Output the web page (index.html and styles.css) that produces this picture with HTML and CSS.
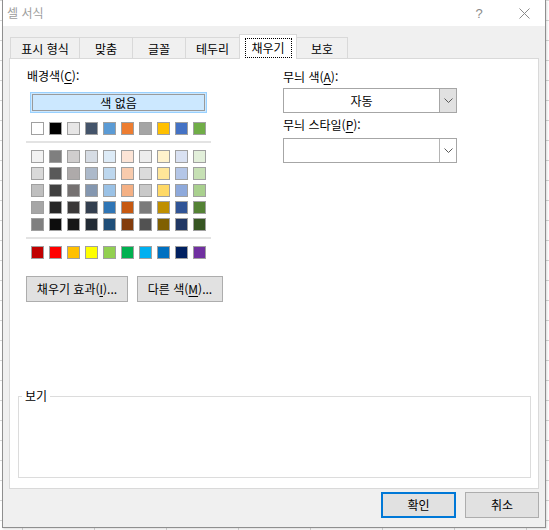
FILE: index.html
```html
<!DOCTYPE html>
<html lang="ko">
<head>
<meta charset="utf-8">
<title>셀 서식</title>
<link rel="stylesheet" href="styles.css">
</head>
<body>
<div class="dialog">
  <div class="titlebar">
    <span class="title">셀 서식</span>
    <span class="help">?</span>
    <span class="close"><svg width="11" height="11" viewBox="0 0 11 11"><path d="M0.5 0.5 L10.5 10.5 M10.5 0.5 L0.5 10.5" stroke="#8a8a8a" stroke-width="1" fill="none"/></svg></span>
  </div>
  <div class="body">
    <div class="tabs">
      <div class="tab t1">표시 형식</div>
      <div class="tab t2">맞춤</div>
      <div class="tab t3">글꼴</div>
      <div class="tab t4">테두리</div>
      <div class="tab t5 sel"><span class="focus">채우기</span></div>
      <div class="tab t6">보호</div>
    </div>
    <div class="panel">
      <div class="cols">
        <div class="left">
          <div class="lbl">배경색(<u>C</u>):</div>
          <div class="nocolor"><span class="nocolor-in">색 없음</span></div>
          <div class="swrow first">
            <span class="sw" style="background:#FFFFFF"></span><span class="sw" style="background:#000000"></span><span class="sw" style="background:#E7E6E6"></span><span class="sw" style="background:#44546A"></span><span class="sw" style="background:#5B9BD5"></span><span class="sw" style="background:#ED7D31"></span><span class="sw" style="background:#A5A5A5"></span><span class="sw" style="background:#FFC000"></span><span class="sw" style="background:#4472C4"></span><span class="sw" style="background:#70AD47"></span>
          </div>
          <div class="sep"></div>
          <div class="swgrid">
            <div class="swrow">
              <span class="sw" style="background:#F2F2F2"></span><span class="sw" style="background:#7F7F7F"></span><span class="sw" style="background:#D0CECE"></span><span class="sw" style="background:#D6DCE4"></span><span class="sw" style="background:#DDEBF7"></span><span class="sw" style="background:#FCE4D6"></span><span class="sw" style="background:#EDEDED"></span><span class="sw" style="background:#FFF2CC"></span><span class="sw" style="background:#D9E1F2"></span><span class="sw" style="background:#E2EFDA"></span>
            </div>
            <div class="swrow">
              <span class="sw" style="background:#D9D9D9"></span><span class="sw" style="background:#595959"></span><span class="sw" style="background:#AEAAAA"></span><span class="sw" style="background:#ACB9CA"></span><span class="sw" style="background:#BDD7EE"></span><span class="sw" style="background:#F8CBAD"></span><span class="sw" style="background:#DBDBDB"></span><span class="sw" style="background:#FFE699"></span><span class="sw" style="background:#B4C6E7"></span><span class="sw" style="background:#C6E0B4"></span>
            </div>
            <div class="swrow">
              <span class="sw" style="background:#BFBFBF"></span><span class="sw" style="background:#404040"></span><span class="sw" style="background:#757171"></span><span class="sw" style="background:#8497B0"></span><span class="sw" style="background:#9BC2E6"></span><span class="sw" style="background:#F4B084"></span><span class="sw" style="background:#C9C9C9"></span><span class="sw" style="background:#FFD966"></span><span class="sw" style="background:#8EA9DB"></span><span class="sw" style="background:#A9D08E"></span>
            </div>
            <div class="swrow">
              <span class="sw" style="background:#A6A6A6"></span><span class="sw" style="background:#262626"></span><span class="sw" style="background:#3A3838"></span><span class="sw" style="background:#333F4F"></span><span class="sw" style="background:#2F75B5"></span><span class="sw" style="background:#C65911"></span><span class="sw" style="background:#7B7B7B"></span><span class="sw" style="background:#BF8F00"></span><span class="sw" style="background:#305496"></span><span class="sw" style="background:#548235"></span>
            </div>
            <div class="swrow">
              <span class="sw" style="background:#808080"></span><span class="sw" style="background:#0D0D0D"></span><span class="sw" style="background:#161616"></span><span class="sw" style="background:#222B35"></span><span class="sw" style="background:#1F4E78"></span><span class="sw" style="background:#833C0C"></span><span class="sw" style="background:#525252"></span><span class="sw" style="background:#806000"></span><span class="sw" style="background:#203764"></span><span class="sw" style="background:#375623"></span>
            </div>
          </div>
          <div class="sep"></div>
          <div class="swrow std">
            <span class="sw" style="background:#C00000"></span><span class="sw" style="background:#FF0000"></span><span class="sw" style="background:#FFC000"></span><span class="sw" style="background:#FFFF00"></span><span class="sw" style="background:#92D050"></span><span class="sw" style="background:#00B050"></span><span class="sw" style="background:#00B0F0"></span><span class="sw" style="background:#0070C0"></span><span class="sw" style="background:#002060"></span><span class="sw" style="background:#7030A0"></span>
          </div>
          <div class="fillbtns">
            <button class="btn b-effect">채우기 효과(<u>I</u>)...</button>
            <button class="btn b-more">다른 색(<u>M</u>)...</button>
          </div>
        </div>
        <div class="right">
          <div class="lbl l1">무늬 색(<u>A</u>):</div>
          <div class="combo">
            <span class="combo-val">자동</span>
            <span class="combo-arrow gray"><svg width="9" height="5" viewBox="0 0 9 5"><path d="M0.5 0.5 L4.5 4.5 L8.5 0.5" stroke="#5a5a5a" stroke-width="1" fill="none"/></svg></span>
          </div>
          <div class="lbl l2">무늬 스타일(<u>P</u>):</div>
          <div class="combo c2">
            <span class="combo-val"></span>
            <span class="combo-arrow"><svg width="9" height="5" viewBox="0 0 9 5"><path d="M0.5 0.5 L4.5 4.5 L8.5 0.5" stroke="#5a5a5a" stroke-width="1" fill="none"/></svg></span>
          </div>
        </div>
      </div>
      <div class="preview">
        <span class="legend">보기</span>
      </div>
    </div>
    <div class="actions">
      <button class="btn ok">확인</button>
      <button class="btn cancel">취소</button>
    </div>
  </div>
</div>
</body>
</html>
```

FILE: styles.css
```css
* { box-sizing: border-box; }

body {
  margin: 0;
  width: 549px;
  height: 530px;
  overflow: hidden;
  background-color: #ffffff;
  background-image:
    linear-gradient(#d6d6d6 1px, transparent 1px),
    linear-gradient(90deg, #d6d6d6 1px, transparent 1px);
  background-size: 72px 20px;
  background-position: 22px 0;
  font-family: "Noto Sans CJK KR", "Noto Sans", sans-serif;
  font-size: 12px;
  color: #000;
}

u { text-decoration: underline; text-underline-offset: 2px; }

.dialog {
  margin-left: 2px;
  width: 544px;
  height: 528px;
  border: 1px solid #8f8f8f;
  border-top: none;
  background: #f0f0f0;
  display: flex;
  flex-direction: column;
  box-shadow: 1px 1px 2px rgba(0, 0, 0, 0.15);
}

.titlebar {
  height: 26px;
  background: #ffffff;
  display: flex;
  align-items: center;
  padding-left: 4px;
  padding-right: 6px;
  color: #9d9d9d;
  flex: none;
}

.title { flex: 1; font-size: 12px; line-height: 16px; }

.help {
  width: 20px;
  text-align: center;
  font-family: "Liberation Sans", sans-serif;
  font-size: 13px;
  color: #8a8a8a;
  margin-right: 20px;
}

.close {
  width: 30px;
  height: 26px;
  display: flex;
  align-items: center;
  justify-content: center;
}

.body {
  flex: 1;
  display: flex;
  flex-direction: column;
  padding: 8px 6px 0 6px;
}

.tabs {
  display: flex;
  align-items: flex-end;
  height: 24px;
  padding-left: 1px;
  flex: none;
}

.tab {
  height: 21px;
  border: 1px solid #d9d9d9;
  border-bottom: none;
  margin-left: -1px;
  background: #f0f0f0;
  display: flex;
  align-items: center;
  justify-content: center;
  line-height: 16px;
  padding-top: 1px;
}

.tab.t1 { margin-left: 0; width: 70px; }
.tab.t2 { width: 54px; }
.tab.t3 { width: 54px; }
.tab.t4 { width: 55px; }
.tab.t5 { width: 58px; }
.tab.t6 { width: 52px; }

.tab.sel {
  height: 25px;
  margin-bottom: -1px;
  background: #ffffff;
  position: relative;
  z-index: 1;
  align-items: flex-start;
  padding-top: 3px;
}

.focus {
  display: block;
  width: 47px;
  height: 20px;
  border: 1px dotted #000;
  text-align: center;
  line-height: 17px;
}

.panel {
  height: 431px;
  background: #ffffff;
  border: 1px solid #d9d9d9;
  display: flex;
  flex-direction: column;
  flex: none;
}

.cols {
  display: grid;
  grid-template-columns: 257px 174px;
  padding-left: 16px;
}

.lbl { height: 16px; line-height: 16px; white-space: nowrap; }
.left .lbl { margin-top: 9px; padding-left: 1px; }

.nocolor {
  margin: 8px 0 0 4px;
  width: 177px;
  height: 21px;
  background: #cce8ff;
  border: 1px solid #99d1ff;
  padding: 1px;
}

.nocolor-in {
  display: flex;
  height: 100%;
  border: 1px solid #9a9a9a;
  align-items: center;
  justify-content: center;
  line-height: 14px;
}

.swrow {
  display: flex;
  gap: 5px;
  margin-left: 5px;
  height: 13px;
}

.swrow.first { margin-top: 9px; }
.swrow.std { margin-top: 7px; }

.sw {
  width: 13px;
  height: 13px;
  border: 1px solid #a0a0a0;
  flex: none;
}

.sep {
  margin-top: 6px;
  width: 185px;
  height: 2px;
  background: #e3e3e3;
}

.swgrid {
  margin-top: 7px;
  display: flex;
  flex-direction: column;
  gap: 4px;
}

.fillbtns {
  display: flex;
  gap: 9px;
  margin-top: 17px;
}

.btn {
  height: 26px;
  background: #e1e1e1;
  border: 1px solid #adadad;
  font: inherit;
  color: #000;
  padding: 0;
  line-height: 16px;
}

.b-effect { width: 102px; }
.b-more { width: 86px; }

.right .l1 { margin-top: 10px; }
.right .l2 { margin-top: 4px; }

.combo {
  margin-top: 3px;
  width: 174px;
  height: 25px;
  border: 1px solid #a6a6a6;
  background: #ffffff;
  display: flex;
}

.combo.c2 { margin-top: 5px; }

.combo-val {
  flex: 1;
  display: flex;
  align-items: center;
  justify-content: center;
  line-height: 16px;
}

.combo-arrow {
  width: 17px;
  border-left: 1px solid #b4b4b4;
  display: flex;
  align-items: center;
  justify-content: center;
}

.combo-arrow.gray {
  background: #e1e1e1;
  border-left-color: #a6a6a6;
}

.preview {
  margin: auto 7px 10px 8px;
  height: 82px;
  border: 1px solid #dcdcdc;
  position: relative;
}

.legend {
  position: absolute;
  top: -9px;
  left: 3px;
  padding: 0 3px;
  background: #ffffff;
  line-height: 16px;
}

.actions {
  display: flex;
  justify-content: flex-end;
  gap: 9px;
  margin-top: 3px;
}

.ok {
  width: 75px;
  border: 2px solid #0078d7;
}

.cancel { width: 74px; }
```
